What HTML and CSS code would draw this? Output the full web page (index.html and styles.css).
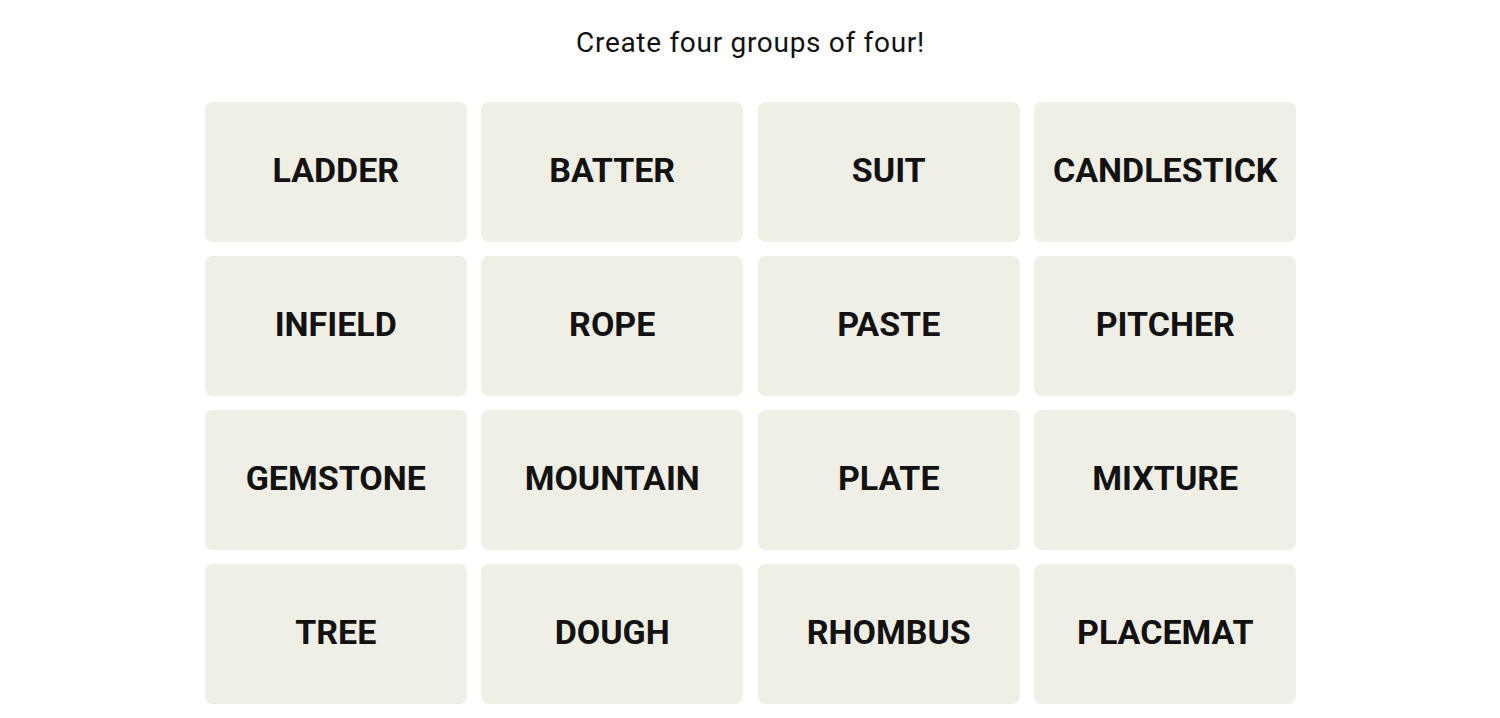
FILE: index.html
```html
<!DOCTYPE html>
<html lang="en">
<head>
<meta charset="utf-8">
<title>Connections</title>
<link rel="stylesheet" href="styles.css">
</head>
<body>
<main class="game">
  <h1 class="prompt">Create four groups of four!</h1>
  <section class="board">
    <button class="tile">LADDER</button>
    <button class="tile">BATTER</button>
    <button class="tile">SUIT</button>
    <button class="tile">CANDLESTICK</button>
    <button class="tile">INFIELD</button>
    <button class="tile">ROPE</button>
    <button class="tile">PASTE</button>
    <button class="tile">PITCHER</button>
    <button class="tile">GEMSTONE</button>
    <button class="tile">MOUNTAIN</button>
    <button class="tile">PLATE</button>
    <button class="tile">MIXTURE</button>
    <button class="tile">TREE</button>
    <button class="tile">DOUGH</button>
    <button class="tile">RHOMBUS</button>
    <button class="tile">PLACEMAT</button>
  </section>
</main>
</body>
</html>
```

FILE: styles.css
```css
* { box-sizing: border-box; }
html, body {
  margin: 0;
  padding: 0;
  background: #ffffff;
  overflow: hidden;
}
.game {
  display: flex;
  flex-direction: column;
  align-items: center;
  padding-left: 1px;
  font-family: Roboto, "Liberation Sans", sans-serif;
  color: #121212;
}
.prompt {
  margin: 27px 0 0;
  font-family: Roboto, "Liberation Sans", sans-serif;
  font-size: 28px;
  font-weight: 400;
  letter-spacing: 0.7px;
  line-height: 32px;
  height: 32px;
}
.board {
  margin-top: 43px;
  display: grid;
  grid-template-columns: repeat(4, 262px);
  grid-auto-rows: 139.5px;
  column-gap: 14.5px;
  row-gap: 14.5px;
}
.tile {
  border: none;
  border-radius: 8px;
  background: #efefe6;
  color: #121212;
  font-family: Roboto, "Liberation Sans", sans-serif;
  font-weight: 700;
  font-size: 34px;
  text-transform: uppercase;
  display: flex;
  align-items: center;
  justify-content: center;
  padding: 0 0 3px;
  cursor: pointer;
}
```
